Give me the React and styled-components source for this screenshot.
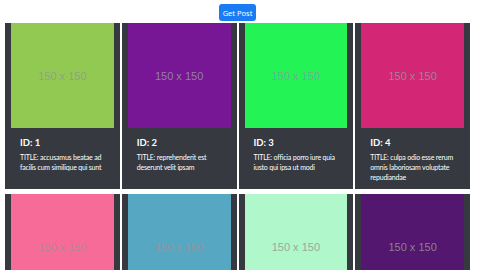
import styled, { createGlobalStyle } from "styled-components";

const GlobalStyle = createGlobalStyle`
  body {
    margin: 0;
    background: #fff;
    font-family: Lato, "Noto Sans", sans-serif;
  }
`;

const posts = [
  { id: 1, color: "#92c952", title: "accusamus beatae ad facilis cum similique qui sunt" },
  { id: 2, color: "#771796", title: "reprehenderit est deserunt velit ipsam" },
  { id: 3, color: "#24f355", title: "officia porro iure quia iusto qui ipsa ut modi" },
  { id: 4, color: "#d32776", title: "culpa odio esse rerum omnis laboriosam voluptate repudiandae" },
  { id: 5, color: "#f66b97", title: "natus nisi omnis corporis facere molestiae rerum in" },
  { id: 6, color: "#56a8c2", title: "accusamus ea aliquid et amet sequi nemo" },
  { id: 7, color: "#b0f7cc", title: "officia delectus consequatur vero aut veniam explicabo molestias" },
  { id: 8, color: "#54176f", title: "aut porro officiis laborum odit ea laudantium corporis" },
];

const Page = styled.div`
  padding-top: 4px;
  width: 475px;
  height: 266px;
  overflow: hidden;
`;

const Toolbar = styled.div`
  display: flex;
  justify-content: center;
`;

const Button = styled.button`
  background: #1a7cf5;
  color: #fff;
  border: none;
  border-radius: 3px;
  height: 17px;
  width: 37px;
  padding: 0;
  font-family: "Noto Sans", sans-serif;
  font-size: 7.5px;
`;

const Grid = styled.div`
  display: grid;
  grid-template-columns: repeat(4, 1fr);
  column-gap: 2px;
  row-gap: 5px;
  margin: 2px 0 0 5px;
  width: 465px;
`;

const Card = styled.div`
  background: #363a40;
  display: flex;
  flex-direction: column;
`;

const Thumb = styled.div`
  margin: 0 6px;
  height: 105px;
  background: ${(p) => p.$color};
  display: flex;
  align-items: center;
  justify-content: center;
  color: rgba(150, 150, 150, 0.85);
  font-family: "Liberation Sans", Arial, sans-serif;
  font-size: 11px;
`;

const Body = styled.div`
  padding: 9px 12px 7px 15px;
  color: #fff;
`;

const IdText = styled.div`
  font-weight: 700;
  font-size: 9.5px;
  line-height: 11px;
  margin-bottom: 4px;
`;

const TitleText = styled.div`
  font-size: 7px;
  line-height: 10px;
  letter-spacing: -0.2px;
`;

export default function App() {
  return (
    <>
      <GlobalStyle />
      <Page>
        <Toolbar>
          <Button>Get Post</Button>
        </Toolbar>
        <Grid>
          {posts.map((post) => (
            <Card key={post.id}>
              <Thumb $color={post.color}>150 x 150</Thumb>
              <Body>
                <IdText>ID: {post.id}</IdText>
                <TitleText>TITLE: {post.title}</TitleText>
              </Body>
            </Card>
          ))}
        </Grid>
      </Page>
    </>
  );
}
